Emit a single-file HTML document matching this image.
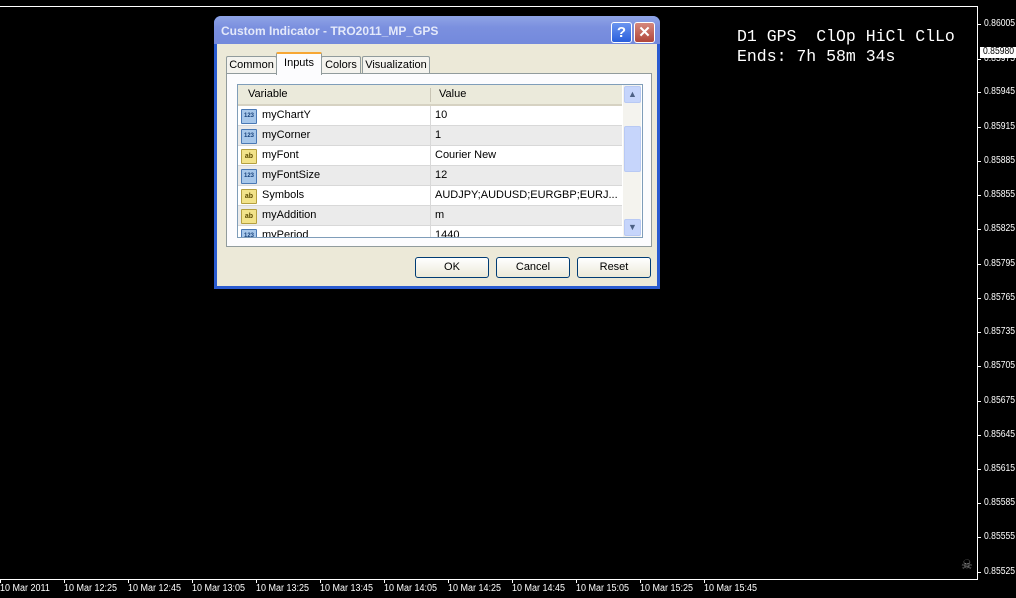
<!DOCTYPE html>
<html><head><style>
body{margin:0;width:1016px;height:598px;background:#000;position:relative;overflow:hidden;font-family:"Liberation Sans",sans-serif;}
.ab{position:absolute}
.pl{position:absolute;left:984px;color:#fff;font-size:10px;line-height:10px;transform:scaleX(0.86);transform-origin:0 0;white-space:nowrap}
.pt{position:absolute;left:977px;width:4px;height:1px;background:#fff}
.tl{position:absolute;top:584px;color:#fff;font-size:10px;line-height:10px;white-space:nowrap;transform:scaleX(0.9);transform-origin:0 0}
.tt{position:absolute;top:579px;width:1px;height:4px;background:#fff}
.dlg{position:absolute;left:214px;top:16px;width:446px;height:273px;background:#2a5bd0;border-radius:7px 7px 0 0}
.title{position:absolute;left:0;top:0;width:446px;height:28px;border-radius:7px 7px 0 0;background:linear-gradient(#8fa4e6,#7b90df 40%,#7389dc);}
.title span{position:absolute;left:7px;top:8px;color:#e4e9fa;font-weight:bold;font-size:12px}
.body{position:absolute;left:3px;top:28px;width:440px;height:242px;background:#ece9d8}
.tab{position:absolute;top:10px;height:18px;background:#f4f3ee;border:1px solid #919b9c;border-bottom:none;font-size:11px;line-height:18px;text-align:center;color:#000;border-radius:2px 2px 0 0}
.panel{position:absolute;left:9px;top:29px;width:424px;height:172px;background:#fcfcfe;border:1px solid #919b9c}
.grid{position:absolute;left:10px;top:10px;width:404px;height:152px;border:1px solid #7f9db9;background:#fff;overflow:hidden}
.hdr{position:absolute;left:0;top:0;width:384px;height:19px;background:#ebeadb;border-bottom:2px solid #d6d2c2;font-size:11px;line-height:19px}
.row{position:absolute;left:0;width:384px;height:19px;border-bottom:1px solid #d8d8d8;font-size:11px;line-height:19px}
.row .v{position:absolute;left:24px}
.row .w{position:absolute;left:197px}
.row .sep{position:absolute;left:192px;top:0;width:1px;height:20px;background:#d8d8d8}
.ic{position:absolute;left:3px;top:3px;width:14px;height:13px;border-radius:1px;font-size:7px;line-height:13px;text-align:center;font-weight:bold}
.n{background:#a7c7ea;border:1px solid #4a79b5;color:#16407a;font-size:6px}
.s{background:#f2e38a;border:1px solid #b5a040;color:#5a4a00}
.sb{position:absolute;left:385px;top:0;width:18px;height:152px;background:#f4f3ee}
.btn{position:absolute;top:213px;width:72px;height:19px;border:1px solid #003c74;border-radius:3px;background:linear-gradient(#fff,#ece9d8);font-size:11px;line-height:19px;text-align:center}
</style></head><body>
<div class="ab" style="left:0;top:6px;width:977px;height:1px;background:#fff"></div>
<div class="ab" style="left:977px;top:6px;width:1px;height:574px;background:#fff"></div>
<div class="ab" style="left:0;top:579px;width:978px;height:1px;background:#fff"></div>
<div class="ab" style="left:737px;top:27px;color:#fff;font-family:'Liberation Mono',monospace;font-size:16.5px;line-height:20px;white-space:pre">D1 GPS  ClOp HiCl ClLo
Ends: 7h 58m 34s</div>

<div class="pt" style="top:24px"></div><div class="pl" style="top:19px">0.86005</div>
<div class="pt" style="top:59px"></div><div class="pl" style="top:54px">0.85975</div>
<div class="ab" style="left:980px;top:47px;width:36px;height:11px;background:#fff;"></div>
<div class="pl" style="top:47px;left:983px;color:#000">0.85980</div>
<div class="pt" style="top:92px"></div><div class="pl" style="top:87px">0.85945</div>
<div class="pt" style="top:127px"></div><div class="pl" style="top:122px">0.85915</div>
<div class="pt" style="top:161px"></div><div class="pl" style="top:156px">0.85885</div>
<div class="pt" style="top:195px"></div><div class="pl" style="top:190px">0.85855</div>
<div class="pt" style="top:229px"></div><div class="pl" style="top:224px">0.85825</div>
<div class="pt" style="top:264px"></div><div class="pl" style="top:259px">0.85795</div>
<div class="pt" style="top:298px"></div><div class="pl" style="top:293px">0.85765</div>
<div class="pt" style="top:332px"></div><div class="pl" style="top:327px">0.85735</div>
<div class="pt" style="top:366px"></div><div class="pl" style="top:361px">0.85705</div>
<div class="pt" style="top:401px"></div><div class="pl" style="top:396px">0.85675</div>
<div class="pt" style="top:435px"></div><div class="pl" style="top:430px">0.85645</div>
<div class="pt" style="top:469px"></div><div class="pl" style="top:464px">0.85615</div>
<div class="pt" style="top:503px"></div><div class="pl" style="top:498px">0.85585</div>
<div class="pt" style="top:537px"></div><div class="pl" style="top:532px">0.85555</div>
<div class="pt" style="top:572px"></div><div class="pl" style="top:567px">0.85525</div>
<div class="ab" style="left:961px;top:558px;color:#888;font-size:13px;line-height:13px">☠</div>

<div class="tt" style="left:0"></div><div class="tl" style="left:0">10 Mar 2011</div>
<div class="tt" style="left:64px"></div><div class="tl" style="left:64px">10 Mar 12:25</div>
<div class="tt" style="left:128px"></div><div class="tl" style="left:128px">10 Mar 12:45</div>
<div class="tt" style="left:192px"></div><div class="tl" style="left:192px">10 Mar 13:05</div>
<div class="tt" style="left:256px"></div><div class="tl" style="left:256px">10 Mar 13:25</div>
<div class="tt" style="left:320px"></div><div class="tl" style="left:320px">10 Mar 13:45</div>
<div class="tt" style="left:384px"></div><div class="tl" style="left:384px">10 Mar 14:05</div>
<div class="tt" style="left:448px"></div><div class="tl" style="left:448px">10 Mar 14:25</div>
<div class="tt" style="left:512px"></div><div class="tl" style="left:512px">10 Mar 14:45</div>
<div class="tt" style="left:576px"></div><div class="tl" style="left:576px">10 Mar 15:05</div>
<div class="tt" style="left:640px"></div><div class="tl" style="left:640px">10 Mar 15:25</div>
<div class="tt" style="left:704px"></div><div class="tl" style="left:704px">10 Mar 15:45</div>

<div class="dlg">
 <div class="title"><span>Custom Indicator - TRO2011_MP_GPS</span>
  <div class="ab" style="left:397px;top:6px;width:19px;height:19px;border:1px solid #fff;border-radius:3px;background:linear-gradient(#6b95f0,#2a5fdc);color:#fff;font-weight:bold;font-size:15px;line-height:19px;text-align:center">?</div>
  <div class="ab" style="left:420px;top:6px;width:19px;height:19px;border:1px solid #fff;border-radius:3px;background:linear-gradient(#d6877c,#b0463a);color:#fff;font-weight:bold;font-size:15px;line-height:19px;text-align:center">✕</div>
 </div>
 <div class="body">
  <div class="tab" style="left:9px;width:49px;top:12px;height:16px;line-height:17px">Common</div>
  <div class="tab" style="left:59px;width:44px;top:8px;height:21px;background:#fcfcfe;border-top:2px solid #f7a734;z-index:2;line-height:18px">Inputs</div>
  <div class="tab" style="left:104px;width:38px;top:12px;height:16px;line-height:17px">Colors</div>
  <div class="tab" style="left:145px;width:66px;top:12px;height:16px;line-height:17px">Visualization</div>
  <div class="panel">
   <div class="grid">
    <div class="hdr"><span style="position:absolute;left:10px">Variable</span><span style="position:absolute;left:201px">Value</span><div style="position:absolute;left:192px;top:3px;width:1px;height:14px;background:#c8c4b4"></div></div>
    <div class="row" style="top:21px;background:#fff"><div class="ic n">123</div><span class="v">myChartY</span><div class="sep"></div><span class="w">10</span></div>
    <div class="row" style="top:41px;background:#ebebeb"><div class="ic n">123</div><span class="v">myCorner</span><div class="sep"></div><span class="w">1</span></div>
    <div class="row" style="top:61px;background:#fff"><div class="ic s">ab</div><span class="v">myFont</span><div class="sep"></div><span class="w">Courier New</span></div>
    <div class="row" style="top:81px;background:#ebebeb"><div class="ic n">123</div><span class="v">myFontSize</span><div class="sep"></div><span class="w">12</span></div>
    <div class="row" style="top:101px;background:#fff"><div class="ic s">ab</div><span class="v">Symbols</span><div class="sep"></div><span class="w">AUDJPY;AUDUSD;EURGBP;EURJ...</span></div>
    <div class="row" style="top:121px;background:#ebebeb"><div class="ic s">ab</div><span class="v">myAddition</span><div class="sep"></div><span class="w">m</span></div>
    <div class="row" style="top:141px;background:#fff"><div class="ic n">123</div><span class="v">myPeriod</span><div class="sep"></div><span class="w">1440</span></div>
    <div class="sb">
     <div class="ab" style="left:1px;top:1px;width:15px;height:15px;border:1px solid #b8c9f4;border-radius:2px;background:#c6d5fb;color:#4d6185;font-size:9px;line-height:15px;text-align:center">▲</div>
     <div class="ab" style="left:1px;top:41px;width:15px;height:44px;border:1px solid #b8c9f4;border-radius:2px;background:#c6d5fb"></div>
     <div class="ab" style="left:1px;top:134px;width:15px;height:15px;border:1px solid #b8c9f4;border-radius:2px;background:#c6d5fb;color:#4d6185;font-size:9px;line-height:15px;text-align:center">▼</div>
    </div>
   </div>
  </div>
  <div class="btn" style="left:198px">OK</div>
  <div class="btn" style="left:279px">Cancel</div>
  <div class="btn" style="left:360px">Reset</div>
 </div>
</div>
</body></html>
